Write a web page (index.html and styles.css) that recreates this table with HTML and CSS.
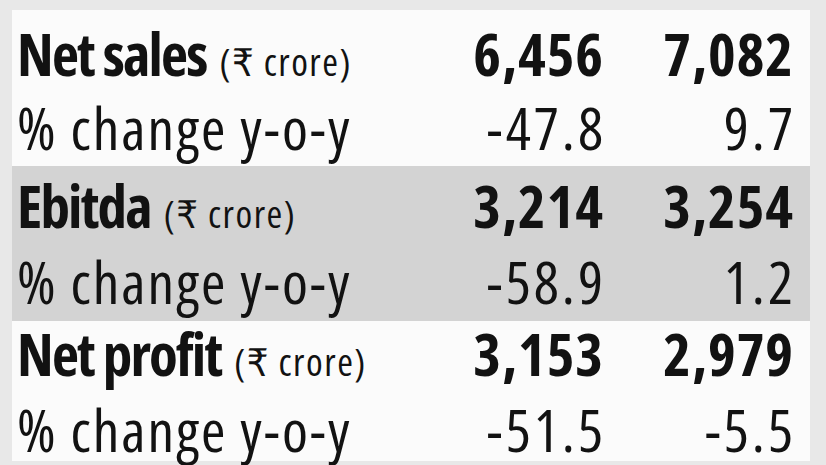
FILE: index.html
```html
<!DOCTYPE html>
<html>
<head>
<meta charset="utf-8">
<link rel="stylesheet" href="styles.css">
</head>
<body>
<div class="panel">
  <div class="group g1">
    <div class="row head">
      <div class="label"><b>Net sales</b> <span class="unit">(₹ crore)</span></div>
      <div class="num">6,456</div>
      <div class="num">7,082</div>
    </div>
    <div class="row">
      <div class="label">% change y-o-y</div>
      <div class="num">-47.8</div>
      <div class="num">9.7</div>
    </div>
  </div>
  <div class="group g2 shade">
    <div class="row head">
      <div class="label"><b>Ebitda</b> <span class="unit">(₹ crore)</span></div>
      <div class="num">3,214</div>
      <div class="num">3,254</div>
    </div>
    <div class="row">
      <div class="label">% change y-o-y</div>
      <div class="num">-58.9</div>
      <div class="num">1.2</div>
    </div>
  </div>
  <div class="group g3">
    <div class="row head">
      <div class="label"><b>Net profit</b> <span class="unit">(₹ crore)</span></div>
      <div class="num">3,153</div>
      <div class="num">2,979</div>
    </div>
    <div class="row">
      <div class="label">% change y-o-y</div>
      <div class="num">-51.5</div>
      <div class="num">-5.5</div>
    </div>
  </div>
</div>
</body>
</html>
```
FILE: styles.css
```css
html, body {
  margin: 0;
  padding: 0;
}
body {
  background: #e8e8e8;
  width: 826px;
  height: 465px;
  overflow: hidden;
  font-family: "Open Sans", "DejaVu Sans Condensed", sans-serif;
  font-stretch: 75%;
  color: #121212;
}
.panel {
  margin: 10px 0 0 12px;
  width: 798px;
  background: #fbfbfb;
}
.group {
  display: flex;
  flex-direction: column;
}
.g1 {
  padding: 11px 0 7px;
  gap: 10px;
}
.g2 {
  padding: 7px 0 8px;
  gap: 12px;
}
.g3 {
  padding: 0;
  gap: 12px;
}
.group.shade {
  background: #d3d3d3;
}
.row {
  display: grid;
  grid-template-columns: 1fr 190px 190px;
  height: 64px;
  line-height: 64px;
  padding: 0 17px 0 5px;
  font-size: 59px;
  white-space: nowrap;
}
.label {
  letter-spacing: 2px;
}
.row .num {
  text-align: right;
  letter-spacing: 3px;
  margin-right: -3px;
}
.row.head .num {
  font-weight: bold;
  letter-spacing: 1px;
  margin-right: -1px;
}
.label b {
  font-weight: bold;
  letter-spacing: -1.8px;
}
.unit {
  font-size: 38px;
  letter-spacing: 1.5px;
}
```
